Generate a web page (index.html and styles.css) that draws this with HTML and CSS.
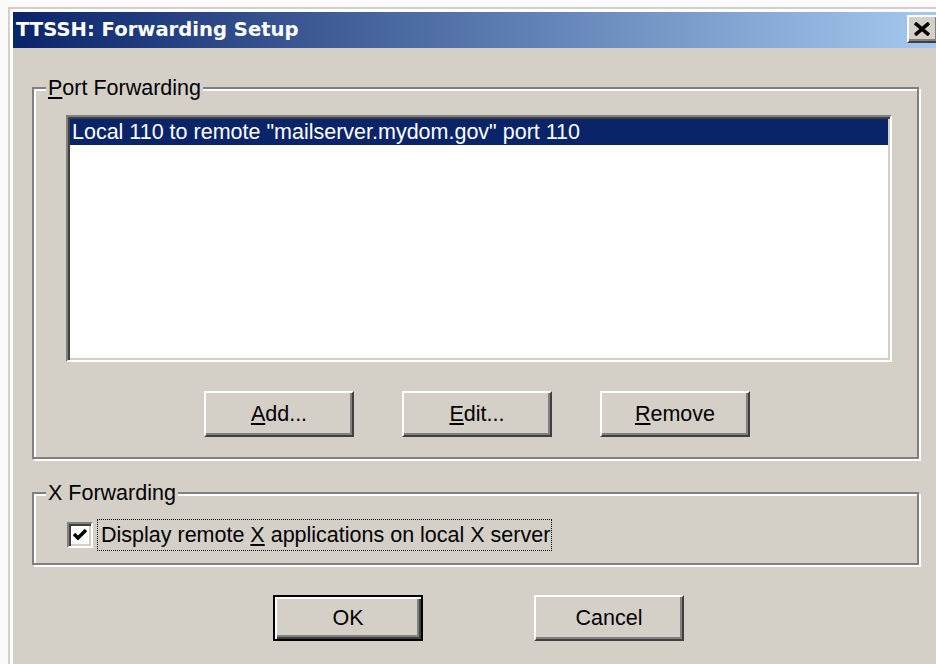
FILE: index.html
```html
<!DOCTYPE html>
<html lang="en">
<head>
<meta charset="utf-8">
<title>TTSSH: Forwarding Setup</title>
<link rel="stylesheet" href="styles.css">
</head>
<body>
<div class="window">
  <div class="titlebar">
    <span class="title">TTSSH: Forwarding Setup</span>
    <button class="close" type="button" aria-label="Close">
      <svg width="16" height="14" viewBox="0 0 16 14">
        <path d="M1 1 L15 13 M15 1 L1 13" stroke="#000" stroke-width="3.6" fill="none"/>
      </svg>
    </button>
  </div>
  <div class="client">
    <div class="group group-port">
      <span class="caption"><u>P</u>ort Forwarding</span>
      <div class="listbox">
        <div class="item selected">Local 110 to remote "mailserver.mydom.gov" port 110</div>
      </div>
      <div class="button-row">
        <button class="btn" type="button"><u>A</u>dd...</button>
        <button class="btn" type="button"><u>E</u>dit...</button>
        <button class="btn" type="button"><u>R</u>emove</button>
      </div>
    </div>
    <div class="group group-x">
      <span class="caption">X Forwarding</span>
      <label class="check">
        <span class="box">
          <svg width="18" height="18" viewBox="0 0 18 18">
            <path d="M3 8 L7 12 L15 4" stroke="#000" stroke-width="3.4" fill="none"/>
          </svg>
        </span>
        <span class="check-label">Display remote <u>X</u> applications on local X server</span>
      </label>
    </div>
    <div class="dialog-buttons">
      <button class="btn default" type="button">OK</button>
      <button class="btn" type="button">Cancel</button>
    </div>
  </div>
</div>
</body>
</html>
```
FILE: styles.css
```css
html, body {
  margin: 0;
  width: 936px;
  height: 664px;
  overflow: hidden;
  background: #fbfbfb;
}

.window {
  margin: 7px 0 0 8px;
  width: 940px;
  height: 700px;
  box-sizing: border-box;
  background: #d4d0c8;
  border-top: 2px solid #d4d0c8;
  border-left: 2px solid #d4d0c8;
  padding: 3px 0 0 3px;
  box-shadow: inset 3px 3px 0 #ffffff;
  font-family: "Liberation Sans", Arial, sans-serif;
  font-size: 21.5px;
  color: #000;
}

/* caption bar */
.titlebar {
  width: 930px;
  height: 36px;
  box-sizing: border-box;
  display: flex;
  align-items: flex-start;
  justify-content: space-between;
  padding: 0 4px 0 3px;
  background: linear-gradient(to right, #0a246a, #a6caf0);
}

.title {
  color: #fff;
  font-family: "DejaVu Sans", Tahoma, sans-serif;
  font-weight: bold;
  font-size: 19.6px;
  line-height: 36px;
}

.close {
  margin-top: 3px;
  width: 32px;
  height: 28px;
  padding: 0 2px 0 0;
  display: flex;
  align-items: center;
  justify-content: center;
  background: #d4d0c8;
  border: 2px solid;
  border-color: #fff #404040 #404040 #fff;
  box-shadow: inset -2px -2px 0 #808080;
  box-sizing: border-box;
}

.client {
  padding: 39px 0 0 19px;
}

/* etched group box */
.group {
  position: relative;
  width: 887px;
  box-sizing: border-box;
  border: 2px solid #808080;
  box-shadow: inset 2px 2px 0 #fff, 2px 2px 0 #fff;
}

.caption {
  position: absolute;
  top: -13px;
  left: 12px;
  padding: 0 2px;
  line-height: 24px;
  background: #d4d0c8;
}

u {
  text-decoration-thickness: 2px;
  text-underline-offset: 2px;
}

.group-port {
  height: 372px;
  padding: 26px 0 0 32px;
}

.listbox {
  width: 826px;
  height: 247px;
  box-sizing: border-box;
  background: #fff;
  border: 2px solid;
  border-color: #808080 #fff #fff #808080;
  box-shadow: inset 2px 2px 0 #404040, inset -2px -2px 0 #d4d0c8;
  padding: 2px;
}

.item {
  height: 26px;
  line-height: 26px;
  padding-left: 2px;
  white-space: nowrap;
}

.item.selected {
  background: #0a246a;
  color: #fff;
}

.button-row {
  display: flex;
  gap: 48px;
  margin: 29px 0 0 138px;
}

.btn {
  width: 150px;
  height: 46px;
  box-sizing: border-box;
  padding: 0;
  background: #d4d0c8;
  font-family: "Liberation Sans", Arial, sans-serif;
  font-size: 21.5px;
  color: #000;
  border: 2px solid;
  border-color: #fff #404040 #404040 #fff;
  box-shadow: inset -2px -2px 0 #808080;
}

.btn.default {
  border-color: #000;
  box-shadow: inset 2px 2px 0 #fff, inset -2px -2px 0 #404040, inset -4px -4px 0 #808080;
}

.group-x {
  margin-top: 33px;
  height: 73px;
  padding: 25px 0 0 33px;
}

.check {
  display: flex;
  align-items: center;
  gap: 4px;
}

.box {
  width: 26px;
  height: 26px;
  box-sizing: border-box;
  background: #fff;
  border: 2px solid;
  border-color: #808080 #fff #fff #808080;
  box-shadow: inset 2px 2px 0 #404040, inset -2px -2px 0 #d4d0c8;
  display: flex;
  align-items: center;
  justify-content: center;
}

.check-label {
  border: 1px dotted #000;
  padding: 3px 1px 3px 3px;
  line-height: 24px;
}

.dialog-buttons {
  display: flex;
  gap: 111px;
  margin: 30px 0 0 241px;
}
```
